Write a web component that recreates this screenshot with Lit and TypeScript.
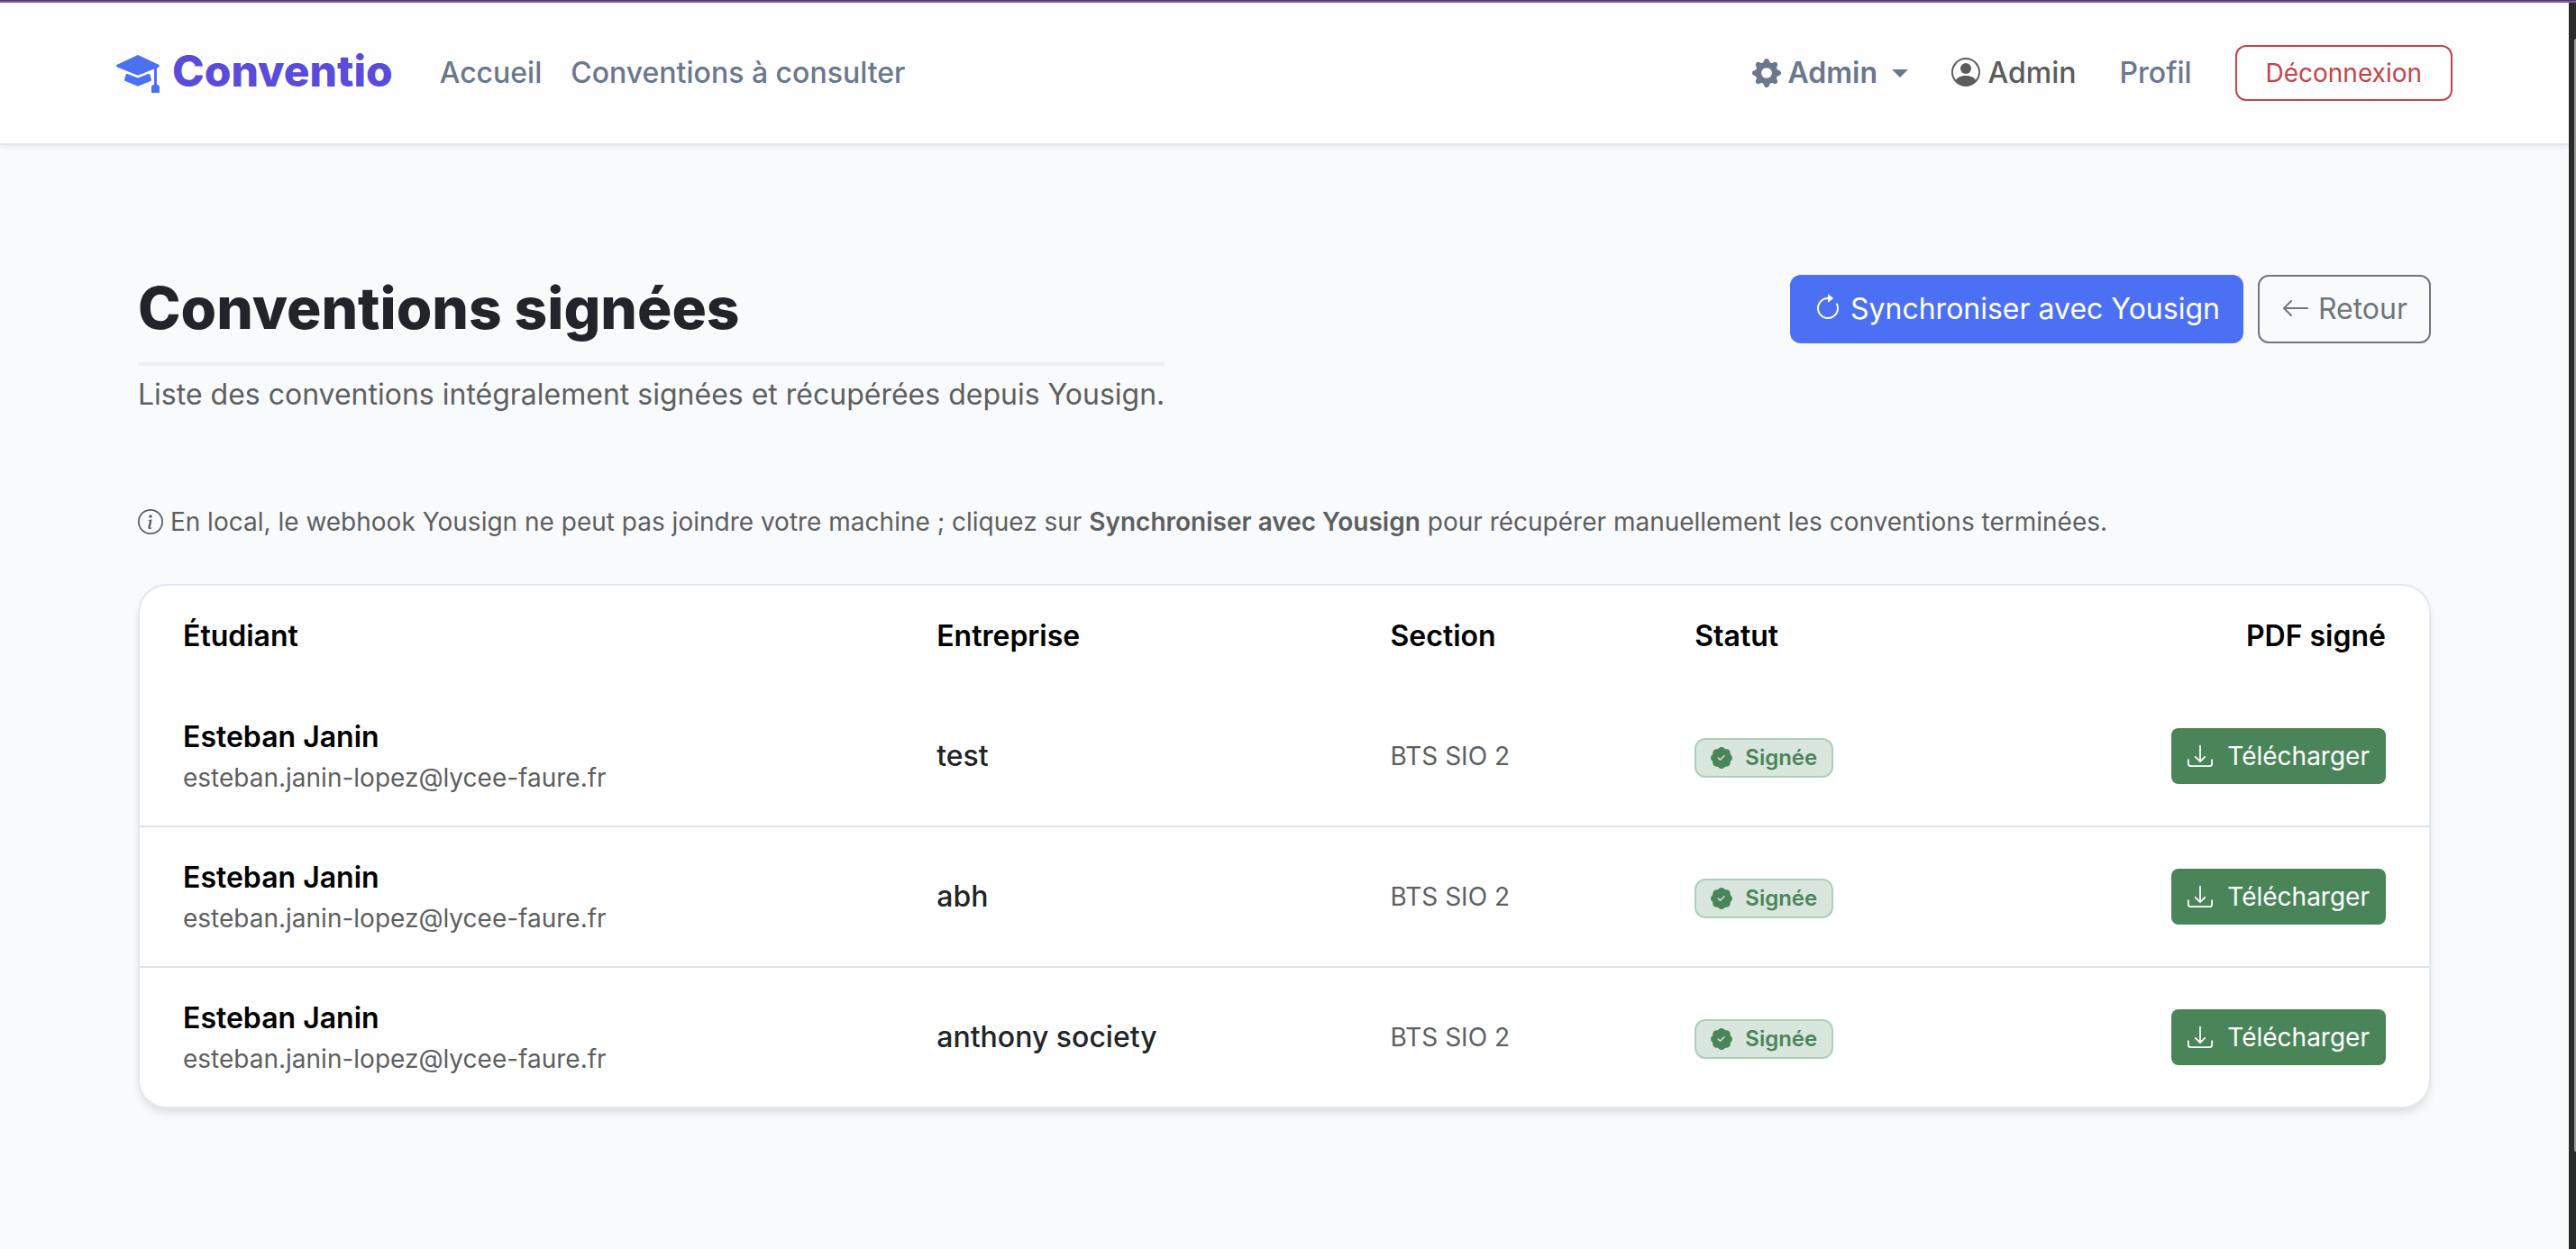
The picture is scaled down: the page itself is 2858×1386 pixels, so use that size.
import { LitElement, html, css, svg } from "lit";
import { customElement } from "lit/decorators.js";

interface Convention {
  student: string;
  email: string;
  company: string;
  section: string;
}

const conventions: Convention[] = [
  { student: "Esteban Janin", email: "esteban.janin-lopez@lycee-faure.fr", company: "test", section: "BTS SIO 2" },
  { student: "Esteban Janin", email: "esteban.janin-lopez@lycee-faure.fr", company: "abh", section: "BTS SIO 2" },
  { student: "Esteban Janin", email: "esteban.janin-lopez@lycee-faure.fr", company: "anthony society", section: "BTS SIO 2" },
];

const shapes = {
  mortarboard: svg`<path d="M8.211 2.047a.5.5 0 0 0-.422 0l-7.5 3.5a.5.5 0 0 0 .025.917l7.5 3a.5.5 0 0 0 .372 0L14 7.14V13a1 1 0 0 0-1 1v2h3v-2a1 1 0 0 0-1-1V6.739l.686-.275a.5.5 0 0 0 .025-.917z"/><path d="M4.176 9.032a.5.5 0 0 0-.656.327l-.5 1.7a.5.5 0 0 0 .294.605l4.5 1.8a.5.5 0 0 0 .372 0l4.5-1.8a.5.5 0 0 0 .294-.605l-.5-1.7a.5.5 0 0 0-.656-.327L8 10.466z"/>`,
  gear: svg`<path d="M9.405 1.05c-.413-1.4-2.397-1.4-2.81 0l-.1.34a1.464 1.464 0 0 1-2.105.872l-.31-.17c-1.283-.698-2.686.705-1.987 1.987l.169.311c.446.82.023 1.841-.872 2.105l-.34.1c-1.4.413-1.4 2.397 0 2.81l.34.1a1.464 1.464 0 0 1 .872 2.105l-.17.31c-.698 1.283.705 2.686 1.987 1.987l.311-.169a1.464 1.464 0 0 1 2.105.872l.1.34c.413 1.4 2.397 1.4 2.81 0l.1-.34a1.464 1.464 0 0 1 2.105-.872l.31.17c1.283.698 2.686-.705 1.987-1.987l-.169-.311a1.464 1.464 0 0 1 .872-2.105l.34-.1c1.4-.413 1.4-2.397 0-2.81l-.34-.1a1.464 1.464 0 0 1-.872-2.105l.17-.31c.698-1.283-.705-2.686-1.987-1.987l-.311.169a1.464 1.464 0 0 1-2.105-.872zM8 10.93a2.929 2.929 0 1 1 0-5.86 2.929 2.929 0 0 1 0 5.858z"/>`,
  person: svg`<path d="M11 6a3 3 0 1 1-6 0 3 3 0 0 1 6 0"/><path fill-rule="evenodd" d="M0 8a8 8 0 1 1 16 0A8 8 0 0 1 0 8m8-7a7 7 0 0 0-5.468 11.37C3.242 11.226 4.805 10 8 10s4.757 1.225 5.468 2.37A7 7 0 0 0 8 1"/>`,
  refresh: svg`<path fill-rule="evenodd" d="M8 3a5 5 0 1 0 4.546 2.914.5.5 0 0 1 .908-.417A6 6 0 1 1 8 2z"/><path d="M8 4.466V.534a.25.25 0 0 1 .41-.192l2.36 1.966c.12.1.12.284 0 .384L8.41 4.658A.25.25 0 0 1 8 4.466"/>`,
  back: svg`<path fill-rule="evenodd" d="M15 8a.5.5 0 0 0-.5-.5H2.707l3.147-3.146a.5.5 0 1 0-.708-.708l-4 4a.5.5 0 0 0 0 .708l4 4a.5.5 0 0 0 .708-.708L2.707 8.5H14.5A.5.5 0 0 0 15 8"/>`,
  info: svg`<path d="M8 15A7 7 0 1 1 8 1a7 7 0 0 1 0 14m0 1A8 8 0 1 0 8 0a8 8 0 0 0 0 16"/><path d="m8.930 6.588-2.290.287-.082.380.450.083c.294.070.352.176.288.469l-.738 3.468c-.194.897.105 1.319.808 1.319.545 0 1.178-.252 1.465-.598l.088-.416c-.2.176-.492.246-.686.246-.275 0-.375-.193-.304-.533zM9 4.500a1 1 0 1 1-2 0 1 1 0 0 1 2 0"/>`,
  verified: svg`<path d="M10.067.870a2.890 2.890 0 0 0-4.134 0l-.622.638-.890-.011a2.890 2.890 0 0 0-2.924 2.924l.010.890-.636.622a2.890 2.890 0 0 0 0 4.134l.637.622-.011.890a2.890 2.890 0 0 0 2.924 2.924l.890-.010.622.636a2.890 2.890 0 0 0 4.134 0l.622-.637.890.011a2.890 2.890 0 0 0 2.924-2.924l-.010-.890.636-.622a2.890 2.890 0 0 0 0-4.134l-.637-.622.011-.890a2.890 2.890 0 0 0-2.924-2.924l-.890.010zm.287 5.984-3 3a.5.5 0 0 1-.708 0l-1.500-1.500a.5.5 0 1 1 .708-.708L7 8.793l2.646-2.647a.5.5 0 0 1 .708.708"/>`,
  download: svg`<path d="M.5 9.900a.5.5 0 0 1 .5.5v2.500a1 1 0 0 0 1 1h12a1 1 0 0 0 1-1v-2.500a.5.5 0 0 1 1 0v2.500a2 2 0 0 1-2 2H2a2 2 0 0 1-2-2v-2.500a.5.5 0 0 1 .5-.5"/><path d="M7.646 11.854a.5.5 0 0 0 .708 0l3-3a.5.5 0 0 0-.708-.708L8.500 10.293V1.500a.5.5 0 0 0-1 0v8.793L5.354 8.146a.5.5 0 1 0-.708.708z"/>`,
};

const icon = (name: keyof typeof shapes) =>
  html`<svg class="icon" viewBox="0 0 16 16" fill="currentColor" aria-hidden="true">${shapes[name]}</svg>`;

@customElement("app-root")
export class AppRoot extends LitElement {
  static styles = css`
    :host {
      display: flex;
      flex-direction: column;
      min-height: 100vh;
      box-sizing: border-box;
      background: #f9fafc;
      color: #212529;
      font-family: Inter, "Liberation Sans", sans-serif;
      font-size: 32px;
      line-height: 48px;
    }
    * { box-sizing: border-box; }
    a { color: inherit; text-decoration: none; }
    button { font: inherit; cursor: pointer; }
    .edge {
      height: 3px;
      border-bottom: 2px solid #7b6195;
      background: #533872;
    }
    .window {
      display: grid;
      flex: 1;
      grid-template-columns: minmax(0, 1fr) 8px;
    }
    .track {
      display: flex;
      justify-content: flex-end;
      padding: 40px 0 108px;
      background: #2b2b2b;
    }
    .thumb {
      width: 2px;
      border-radius: 2px 0 0 2px;
      background: #9b9b9b;
    }
    .icon {
      width: 1em;
      height: 1em;
      vertical-align: -0.125em;
    }
    .header {
      background: #fefefe;
      border-bottom: 2px solid #e2e6ed;
      box-shadow: 0 2px 6px rgba(15, 23, 42, 0.09);
    }
    .bar {
      display: flex;
      align-items: center;
      max-width: 2640px;
      min-height: 156px;
      margin: 0 auto;
      padding: 0 24px;
      color: #6b778c;
      font-weight: 500;
    }
    .brand {
      display: flex;
      align-items: center;
      gap: 14px;
      margin-right: 36px;
      padding-bottom: 4px;
      color: #5b4bdb;
      font-size: 48px;
      font-weight: 800;
    }
    .brand .icon { color: #4c70f4; }
    .links { display: flex; }
    .link { padding: 0 16px; }
    .account {
      display: flex;
      align-items: center;
      gap: 32px;
      margin-left: auto;
    }
    .menu {
      display: flex;
      align-items: center;
      gap: 8px;
      padding: 0 16px;
      border: 0;
      background: none;
      color: inherit;
      font-weight: 600;
    }
    .caret {
      margin-left: 8px;
      border: 9px solid transparent;
      border-top-color: currentColor;
      border-bottom: 0;
    }
    .user { color: #5b5c5e; }
    .profile { padding-left: 16px; padding-right: 16px; }
    .btn {
      display: inline-block;
      padding: 12px 24px;
      border: 2px solid transparent;
      border-radius: 12px;
      background: none;
      white-space: nowrap;
    }
    .btn-small {
      padding: 8px 16px;
      font-size: 28px;
      line-height: 42px;
    }
    .btn-logout {
      padding: 8px 32px;
      border-color: #c4444b;
      color: #c4444b;
      font-weight: 400;
    }
    .btn-primary {
      background: #4c70f4;
      color: #ffffff;
    }
    .btn-back { border-color: #6f767d; color: #6f767d; }
    .btn-download {
      border-radius: 8px;
      background: #4a8559;
      color: #ffffff;
    }
    .btn-download .icon { margin-right: 8px; }
    .main {
      max-width: 2640px;
      margin: 0 auto;
      padding: 144px 48px 96px;
    }
    .top {
      display: flex;
      justify-content: space-between;
      align-items: flex-start;
      margin-bottom: 96px;
    }
    .title {
      margin: 0 0 8px;
      padding-bottom: 24px;
      border-bottom: 4px solid #f0f0f0;
      font-size: 64px;
      line-height: 73px;
      font-weight: 800;
    }
    .subtitle { margin: 0; color: #5e5f61; }
    .actions { display: flex; gap: 16px; }
    .note {
      margin: 0 0 48px;
      color: #5e5f61;
      font-size: 28px;
      line-height: 42px;
    }
    .note strong { font-weight: 600; }
    .card {
      overflow: hidden;
      border: 2px solid #e2e7f0;
      border-radius: 32px;
      background: #ffffff;
      box-shadow: 0 8px 12px -2px rgba(0, 0, 0, 0.08), 0 4px 8px -2px rgba(0, 0, 0, 0.05);
    }
    .table { width: 100%; border-collapse: separate; border-spacing: 0; }
    .table th, .table td {
      padding: 32px 48px;
      text-align: left;
      vertical-align: middle;
    }
    .table th { color: #000000; font-weight: 600; }
    .table tbody tr:not(:last-child) td { border-bottom: 2px solid #dee2e6; }
    .table .end { text-align: right; }
    .table td.end { padding-top: 0; padding-bottom: 0; }
    .name { color: #000000; font-weight: 600; }
    .company { font-weight: 500; }
    .small { color: #5e5f61; font-size: 28px; line-height: 42px; }
    .badge {
      display: inline-flex;
      align-items: center;
      gap: 14px;
      padding: 8px 16px;
      border: 2px solid #aecfba;
      border-radius: 12px;
      background: #d8e6de;
      color: #4a8559;
      font-size: 24px;
      line-height: 24px;
      font-weight: 600;
      vertical-align: middle;
    }
  `;

  private row(c: Convention) {
    return html`
      <tr>
        <td>
          <div class="name">${c.student}</div>
          <div class="small">${c.email}</div>
        </td>
        <td class="company">${c.company}</td>
        <td class="small">${c.section}</td>
        <td><span class="badge">${icon("verified")}<span>Signée</span></span></td>
        <td class="end"><a class="btn btn-small btn-download" href="#">${icon("download")} Télécharger</a></td>
      </tr>
    `;
  }

  render() {
    return html`
      <div class="edge"></div>
      <div class="window">
        <div class="page">
          <header class="header">
            <nav class="bar">
              <a class="brand" href="#">${icon("mortarboard")}<span>Conventio</span></a>
              <div class="links">
                <a class="link" href="#">Accueil</a>
                <a class="link" href="#">Conventions à consulter</a>
              </div>
              <div class="account">
                <button class="menu" type="button">${icon("gear")}<span>Admin</span><span class="caret"></span></button>
                <span class="user">${icon("person")} Admin</span>
                <a class="profile" href="#">Profil</a>
                <button class="btn btn-small btn-logout" type="button">Déconnexion</button>
              </div>
            </nav>
          </header>
          <main class="main">
            <div class="top">
              <div>
                <h1 class="title">Conventions signées</h1>
                <p class="subtitle">Liste des conventions intégralement signées et récupérées depuis Yousign.</p>
              </div>
              <div class="actions">
                <button class="btn btn-primary" type="button">${icon("refresh")} Synchroniser avec Yousign</button>
                <a class="btn btn-back" href="#">${icon("back")} Retour</a>
              </div>
            </div>
            <p class="note">
              ${icon("info")} En local, le webhook Yousign ne peut pas joindre votre machine ; cliquez sur
              <strong>Synchroniser avec Yousign</strong> pour récupérer manuellement les conventions terminées.
            </p>
            <div class="card">
              <table class="table">
                <thead>
                  <tr>
                    <th scope="col">Étudiant</th>
                    <th scope="col">Entreprise</th>
                    <th scope="col">Section</th>
                    <th scope="col">Statut</th>
                    <th scope="col" class="end">PDF signé</th>
                  </tr>
                </thead>
                <tbody>${conventions.map((c) => this.row(c))}</tbody>
              </table>
            </div>
          </main>
        </div>
        <div class="track"><div class="thumb"></div></div>
      </div>
    `;
  }
}
